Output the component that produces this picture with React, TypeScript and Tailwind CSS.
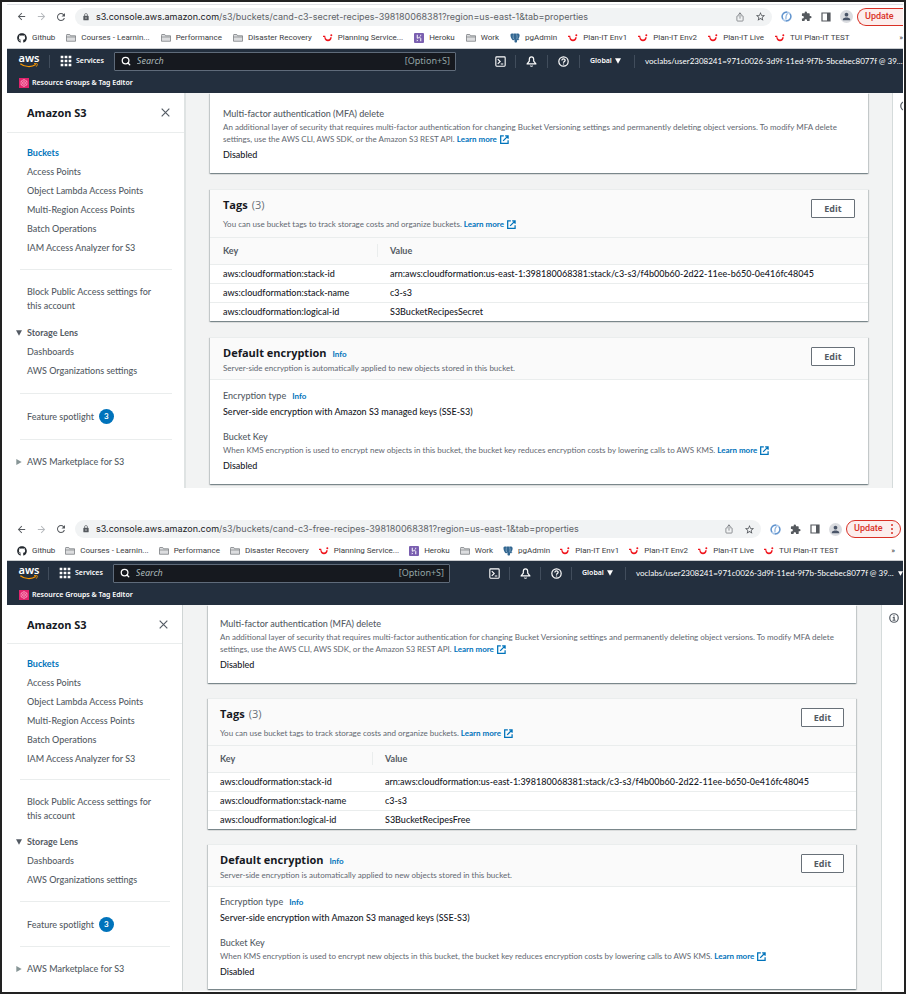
import type { ReactNode } from "react";
import { clsx } from "clsx";
import {
  MdApps,
  MdArrowBack,
  MdArrowForward,
  MdExtension,
  MdLock,
  MdPerson,
  MdRefresh,
  MdStarBorder,
} from "react-icons/md";
import { FiSearch } from "react-icons/fi";
import { FaGithub } from "react-icons/fa";
import { IoShareOutline } from "react-icons/io5";

type WindowProps = {
  bucket: string;
  logicalId: string;
  /** The slightly smaller of the two browser windows. */
  compact: boolean;
};

/* ---------- drawings ---------- */

function FolderIcon() {
  return (
    <svg viewBox="0 0 20 16" className="h-2 w-[10px] shrink-0" aria-hidden="true">
      <path d="M1 2.5V14.5H19V3.5H9L7.5 1H1.5Z" fill="#dcdddf" stroke="#75797d" strokeWidth="1.5" />
      <path d="M1 6H19" stroke="#75797d" strokeWidth="1.3" />
    </svg>
  );
}

function TuiIcon() {
  return (
    <svg viewBox="0 0 20 16" className="h-2 w-[10px] shrink-0" aria-hidden="true">
      <path d="M0 3.5H4.5C4.5 8 6.5 11 10 11S14 9 14.4 6.5H17.5C17 12 14 14.5 10 14.5S3 12 2.6 6H0Z" fill="#f0141c" />
      <circle cx="16.6" cy="2.5" r="2" fill="#f0141c" />
    </svg>
  );
}

function HerokuIcon() {
  return (
    <svg viewBox="0 0 20 20" className="size-[10px] shrink-0" aria-hidden="true">
      <rect width="20" height="20" rx="2" fill="#7a5fb0" />
      <path d="M6.5 3.5V10.5C9 9.2 13.5 8.5 13.5 11V16.5M13.5 3.5C13.5 5 13 6 12 7" fill="none" stroke="#fff" strokeWidth="2" />
      <path d="M5.5 12.8L8.3 15L5.5 17.2Z" fill="#fff" />
    </svg>
  );
}

function ElephantIcon() {
  return (
    <svg viewBox="0 0 20 20" className="size-[10px] shrink-0" aria-hidden="true">
      <path
        d="M1 3C2 .8 5 .8 7 1.5C9 .8 11 .8 12.5 1.5C15 .5 18.5 1 19.2 4C19.5 7 18 10 16.5 12.5L19 13.2C17.5 14.5 15.5 14.5 14 13.8V17.5C13.5 19.8 9.5 19.8 9 17.5V13C8 13.5 7.5 14.5 6 14.5C3.5 14 .5 7 1 3Z"
        fill="#336791"
      />
      <path d="M7 3C6.2 6 6 9 7.2 12M13 3C14.5 6 14.5 9 13.5 12.5" fill="none" stroke="#c5d8e8" strokeWidth="1" />
    </svg>
  );
}

function SwirlIcon() {
  return (
    <svg viewBox="0 0 20 20" className="size-[11px]" aria-hidden="true">
      <circle cx="10" cy="10" r="8" fill="none" stroke="#a9c6e8" strokeWidth="3" />
      <path d="M3.5 14.5A8 8 0 0 1 11 2.2M16.5 5.5A8 8 0 0 1 9 17.8" fill="none" stroke="#5f92cc" strokeWidth="2.2" />
      <path d="M12 4.5C8.5 8 8.5 12 9 15.5" fill="none" stroke="#8fb4de" strokeWidth="2" />
    </svg>
  );
}

function SidePanelIcon() {
  return (
    <svg viewBox="0 0 20 20" className="size-[10px]" aria-hidden="true">
      <path d="M2 2H18V18H2Z" fill="none" stroke="#55595e" strokeWidth="2.4" />
      <path d="M12 2H18V18H12Z" fill="#55595e" />
    </svg>
  );
}

function AwsLogo() {
  return (
    <span className="flex w-5 flex-col items-center" role="img" aria-label="aws">
      <span className="text-[11px] leading-[8px] font-semibold text-white">aws</span>
      <svg viewBox="0 0 40 11" className="mt-px h-[5px] w-5" aria-hidden="true">
        <path d="M1 1.5C11 9.5 26 9.5 35 3.5" fill="none" stroke="#f90" strokeWidth="2.6" />
        <path d="M31 1.5C34 .8 37 .6 38 1.5C38.8 3 37.5 6 36 8" fill="none" stroke="#f90" strokeWidth="2" />
      </svg>
    </span>
  );
}

function ShellIcon() {
  return (
    <svg viewBox="0 0 20 20" className="size-[11px]" fill="none" stroke="#fff" strokeWidth="2" aria-hidden="true">
      <rect x="1.5" y="1.5" width="17" height="17" rx="1.5" />
      <path d="M5 5.5L9.5 10L5 14.5M10.5 14.5H15" />
    </svg>
  );
}

function BellIcon() {
  return (
    <svg viewBox="0 0 20 20" className="size-[11px]" fill="none" stroke="#fff" strokeWidth="2.2" strokeLinejoin="round" aria-hidden="true">
      <path d="M2 14.5L6 9.5V6.5A4 5 0 0 1 14 6.5V9.5L18 14.5Z" />
      <path d="M8 17.5C8.5 19 11.5 19 12 17.5" />
    </svg>
  );
}

function HelpIcon() {
  return (
    <svg viewBox="0 0 20 20" className="size-[11px]" fill="none" stroke="#fff" strokeWidth="2.2" aria-hidden="true">
      <circle cx="10" cy="10" r="8.5" />
      <path d="M7 8C7 4.3 13 4.3 13 7.8C13 10 10 10 10 12.2M10 13.5V15.5" />
    </svg>
  );
}

function InfoCircleIcon() {
  return (
    <svg viewBox="0 0 20 20" className="size-[10px] shrink-0" fill="none" stroke="#545b64" strokeWidth="2.4" aria-hidden="true">
      <circle cx="10" cy="10" r="8.5" />
      <path d="M10 4.5V7M7.5 9.3H10.3V14.5M7 14.5H13" />
    </svg>
  );
}

function ResourceGroupsIcon() {
  return (
    <svg viewBox="0 0 20 20" className="size-[10px]" aria-hidden="true">
      <rect width="20" height="20" fill="#e0246c" />
      <path d="M10 3L16 6.5V13.5L10 17L4 13.5V6.5Z" fill="none" stroke="#ffb3d0" strokeWidth="1.3" />
      <circle cx="10" cy="10" r="2.6" fill="none" stroke="#ffb3d0" strokeWidth="1.3" />
      <path d="M10 3V7.5M10 12.5V17M4 6.5L8 9M12 11L16 13.5M16 6.5L12 9M8 11L4 13.5" stroke="#ffb3d0" strokeWidth="1" />
    </svg>
  );
}

function ExternalIcon() {
  return (
    <svg viewBox="0 0 20 20" className="ml-[3px] inline size-[9px] align-[-2px]" fill="none" stroke="#0073bb" strokeWidth="2.8" aria-hidden="true">
      <path d="M8.5 2H1.5V18.5H18V11.5M11.5 2H18V8.5M18 2L7 13" />
    </svg>
  );
}

function CloseIcon() {
  return (
    <svg viewBox="0 0 20 20" className="size-[9px]" stroke="#545b64" strokeWidth="2.6" aria-hidden="true">
      <path d="M1.5 1.5L18.5 18.5M18.5 1.5L1.5 18.5" />
    </svg>
  );
}

function DownTriangle({ className }: { className: string }) {
  return (
    <svg viewBox="0 0 10 9" className={clsx("shrink-0 fill-current", className)} aria-hidden="true">
      <path d="M0 0H10L5 9Z" />
    </svg>
  );
}

/* ---------- browser chrome ---------- */

function ChromeButton({ label, children }: { label: string; children: ReactNode }) {
  return (
    <button type="button" aria-label={label} className="flex h-5 w-5 shrink-0 items-center justify-center text-[#55595e]">
      {children}
    </button>
  );
}

function Toolbar({ bucket, compact }: { bucket: string; compact: boolean }) {
  return (
    <div className={clsx("flex h-6 items-center overflow-hidden pl-1 font-[Inter,sans-serif]", !compact && "border-t border-[#dfe1e5]")}>
      <ChromeButton label="Back"><MdArrowBack className="size-[11px]" /></ChromeButton>
      <ChromeButton label="Forward"><MdArrowForward className="size-[11px] text-[#b5b8bc]" /></ChromeButton>
      <ChromeButton label="Reload"><MdRefresh className="size-3" /></ChromeButton>
      <div className="ml-1 flex h-[18px] min-w-0 flex-1 items-center rounded-full bg-[#f1f3f4] pr-[2px] pl-[7px]">
        <MdLock className="size-2 shrink-0 text-[#55595e]" />
        <p className="ml-[6px] flex-1 truncate text-[9px] leading-[14px] text-[#5f6368]">
          <span className="text-[#202124]">s3.console.aws.amazon.com</span>
          /s3/buckets/{bucket}?region=us-east-1&amp;tab=properties
        </p>
        <ChromeButton label="Share"><IoShareOutline className="size-[10px]" /></ChromeButton>
        <ChromeButton label="Bookmark this tab"><MdStarBorder className="size-[11px]" /></ChromeButton>
      </div>
      <div className="ml-1 flex shrink-0 items-center">
        <ChromeButton label="Extension"><SwirlIcon /></ChromeButton>
        <ChromeButton label="Extensions"><MdExtension className="size-[11px]" /></ChromeButton>
        <ChromeButton label="Side panel"><SidePanelIcon /></ChromeButton>
        <ChromeButton label="Profile">
          <span className="flex size-[13px] items-center justify-center rounded-full bg-[#dadce0]">
            <MdPerson className="size-[11px] text-[#4a5568]" />
          </span>
        </ChromeButton>
      </div>
      <button
        type="button"
        className={clsx(
          "ml-px flex h-[18px] shrink-0 items-center border border-[#d93025] bg-[#fceeed] pl-[7px] font-[Roboto,sans-serif] text-[9px] font-medium text-[#d93025]",
          compact ? "mr-[2px] w-[55px] rounded-full" : "w-[46px] rounded-l-full border-r-0",
        )}
      >
        Update
        {compact && (
          <span className="mr-[7px] ml-auto flex flex-col gap-[2px]">
            <span className="size-[2px] rounded-full bg-[#d93025]" />
            <span className="size-[2px] rounded-full bg-[#d93025]" />
            <span className="size-[2px] rounded-full bg-[#d93025]" />
          </span>
        )}
      </button>
    </div>
  );
}

const bookmarks: { label: string; icon: ReactNode }[] = [
  { label: "Github", icon: <FaGithub className="size-[10px] text-[#24292f]" /> },
  { label: "Courses - Learnin...", icon: <FolderIcon /> },
  { label: "Performance", icon: <FolderIcon /> },
  { label: "Disaster Recovery", icon: <FolderIcon /> },
  { label: "Planning Service...", icon: <TuiIcon /> },
  { label: "Heroku", icon: <HerokuIcon /> },
  { label: "Work", icon: <FolderIcon /> },
  { label: "pgAdmin", icon: <ElephantIcon /> },
  { label: "Plan-IT Env1", icon: <TuiIcon /> },
  { label: "Plan-IT Env2", icon: <TuiIcon /> },
  { label: "Plan-IT Live", icon: <TuiIcon /> },
  { label: "TUI Plan-IT TEST", icon: <TuiIcon /> },
];

function Bookmarks({ compact }: { compact: boolean }) {
  return (
    <nav
      aria-label="Bookmarks"
      className={clsx(
        "flex items-center overflow-hidden border-b border-[#c9cccf] pl-[10px] font-[Roboto,sans-serif] text-[8px] text-[#3c4043]",
        compact ? "h-5 gap-[10px]" : "h-[21px] gap-[11px]",
      )}
    >
      {bookmarks.map((b) => (
        <a key={b.label} href="#" className="flex shrink-0 items-center gap-[5px] whitespace-nowrap">
          {b.icon}
          {b.label}
        </a>
      ))}
      <button type="button" aria-label="More bookmarks" className={clsx("ml-auto shrink-0", compact && "mr-2")}>
        »
      </button>
    </nav>
  );
}

/* ---------- AWS console header ---------- */

function NavSlot({ className, children }: { className: string; children: ReactNode }) {
  return <div className={clsx("flex h-[13px] shrink-0 items-center", className)}>{children}</div>;
}

function ConsoleNav({ compact }: { compact: boolean }) {
  return (
    <header className="overflow-hidden bg-[#232f3e] font-['Noto_Sans',sans-serif] text-[7px] font-semibold text-white">
      <div className="flex h-6 items-center pl-3">
        <a href="#" aria-label="AWS home"><AwsLogo /></a>
        <button type="button" className={clsx("flex h-[13px] items-center border-l border-[#414d5c] pl-2", compact ? "ml-[9px]" : "ml-[10px]")}>
          <MdApps className="size-4" />
          <span className="ml-[2px]">Services</span>
        </button>
        <label className="ml-[10px] flex h-[19px] min-w-0 flex-1 items-center rounded-[1px] border border-[#5f6b7a] bg-[#16191f] pr-[5px] pl-[6px]">
          <FiSearch className="size-[10px] shrink-0" strokeWidth={3} />
          <input
            type="search"
            aria-label="Search"
            placeholder="Search"
            className="ml-[6px] min-w-0 flex-1 bg-transparent text-[9px] font-normal outline-none placeholder:text-[#aab7b8] placeholder:italic"
          />
          <span className="text-[9px] font-normal text-[#95a5a6]">[Option+S]</span>
        </label>
        <NavSlot className="ml-[29px] w-[30px] justify-center">
          <button type="button" aria-label="CloudShell"><ShellIcon /></button>
        </NavSlot>
        <NavSlot className={clsx("justify-center border-l border-[#414d5c]", compact ? "w-[31px]" : "w-8")}>
          <button type="button" aria-label="Notifications"><BellIcon /></button>
        </NavSlot>
        <NavSlot className={clsx("justify-center border-l border-[#414d5c]", compact ? "w-[31px]" : "w-8")}>
          <button type="button" aria-label="Help"><HelpIcon /></button>
        </NavSlot>
        <NavSlot className={clsx("border-l border-[#414d5c] pl-[10px]", compact ? "w-[54px]" : "w-[55px]")}>
          <button type="button" aria-haspopup="menu" className="flex items-center gap-[3px]">
            Global <DownTriangle className="size-[6px]" />
          </button>
        </NavSlot>
        <NavSlot className={clsx("border-l border-[#414d5c] pl-[10px]", compact ? "w-[278px]" : "w-[269px] overflow-hidden")}>
          <button
            type="button"
            aria-haspopup="menu"
            className="flex shrink-0 items-center gap-1 font-[Lato,sans-serif] text-[8px] font-normal whitespace-nowrap"
          >
            voclabs/user2308241=971c0026-3d9f-11ed-9f7b-5bcebec8077f @ 39... <DownTriangle className="size-[5px]" />
          </button>
        </NavSlot>
      </div>
      <div className="flex h-5 items-center pl-3">
        <a href="#" className="flex items-center gap-[3px]">
          <ResourceGroupsIcon />
          Resource Groups &amp; Tag Editor
        </a>
      </div>
    </header>
  );
}

/* ---------- side navigation ---------- */

const primaryLinks = [
  "Buckets",
  "Access Points",
  "Object Lambda Access Points",
  "Multi-Region Access Points",
  "Batch Operations",
  "IAM Access Analyzer for S3",
];

function SideNav({ compact }: { compact: boolean }) {
  return (
    <aside
      className={clsx(
        "shrink-0 bg-white text-[9px] leading-[19px] font-medium text-[#545b64]",
        compact ? "w-[176px] border-r border-[#d0d5d5]" : "w-[179px] border-r-2 border-[#dfe3e3]",
      )}
    >
      <div className={clsx("flex items-center justify-between border-b border-[#eaeded] pr-[14px] pl-5", compact ? "h-[39px]" : "h-10")}>
        <h2 className="font-['Open_Sans',sans-serif] text-[11px] font-bold text-[#16191f]">Amazon S3</h2>
        <button type="button" aria-label="Close navigation"><CloseIcon /></button>
      </div>
      <nav aria-label="Amazon S3" className="pt-[10px] pr-3 pl-[13px]">
        <ul className="pl-[7px]">
          {primaryLinks.map((label) => (
            <li key={label}>
              <a href="#" className={label === "Buckets" ? "font-bold text-[#0073bb]" : undefined}>{label}</a>
            </li>
          ))}
        </ul>
        <hr className={clsx("border-[#eaeded]", compact ? "mt-[11px]" : "mt-3")} />
        <a href="#" className="mt-[15px] block pr-4 pl-[7px] leading-[14px]">
          Block Public Access settings for this account
        </a>
        <button type="button" aria-expanded="true" className={clsx("-ml-1 flex items-center gap-[5px] font-bold", compact ? "mt-[9px]" : "mt-[10px]")}>
          <DownTriangle className="size-[6px]" />
          Storage Lens
        </button>
        <ul className="pl-[7px]">
          <li><a href="#">Dashboards</a></li>
          <li><a href="#">AWS Organizations settings</a></li>
        </ul>
        <hr className={clsx("border-[#eaeded]", compact ? "mt-3" : "mt-[13px]")} />
        <a href="#" className="mt-[15px] flex items-center gap-[5px] pl-[7px] leading-[15px]">
          Feature spotlight
          <span className="flex size-[15px] items-center justify-center rounded-full bg-[#0073bb] text-[8px] font-bold text-white">3</span>
        </a>
        <hr className={clsx("border-[#eaeded]", compact ? "mt-[14px]" : "mt-[15px]")} />
        <button type="button" aria-expanded="false" className="mt-3 -ml-1 flex items-center gap-[5px]">
          <DownTriangle className="size-[6px] -rotate-90 text-[#879596]" />
          AWS Marketplace for S3
        </button>
      </nav>
    </aside>
  );
}

/* ---------- main column ---------- */

function Card({ children, className }: { children: ReactNode; className?: string }) {
  return (
    <section
      className={clsx(
        "bg-white shadow-[0_1px_1px_0_rgba(0,28,36,0.3),1px_1px_1px_0_rgba(0,28,36,0.15),-1px_1px_1px_0_rgba(0,28,36,0.15)]",
        className,
      )}
    >
      {children}
    </section>
  );
}

function CardHeader({ title, extra, description, compact, className }: {
  title: string;
  extra: ReactNode;
  description: ReactNode;
  compact: boolean;
  className: string;
}) {
  return (
    <div className={clsx("flex items-start justify-between border-y border-[#eaeded] bg-[#fafafa] pt-[7px]", compact ? "px-3" : "px-[13px]", className)}>
      <div>
        <h2 className="flex items-baseline font-['Open_Sans',sans-serif] text-[11px] leading-4 font-bold text-[#16191f]">
          {title}
          {extra}
        </h2>
        {description}
      </div>
      <button
        type="button"
        className={clsx(
          "mt-[2px] h-[19px] shrink-0 rounded-[1px] border border-[#687078] bg-white font-['Open_Sans',sans-serif] text-[9px] font-bold text-[#545b64]",
          compact ? "w-[43px]" : "w-11",
        )}
      >
        Edit
      </button>
    </div>
  );
}

function LearnMore() {
  return (
    <a href="#" className="font-bold whitespace-nowrap text-[#0073bb]">
      Learn more
      <ExternalIcon />
    </a>
  );
}

function InfoLink() {
  return <a href="#" className="ml-[6px] font-[Lato,sans-serif] text-[8px] font-bold text-[#0073bb]">Info</a>;
}

function Description({ children, className }: { children: ReactNode; className?: string }) {
  return <p className={clsx("text-[8px] leading-3 font-normal text-[#5f6770]", className)}>{children}</p>;
}

function Main({ compact, logicalId }: { compact: boolean; logicalId: string }) {
  const rows = [
    ["aws:cloudformation:stack-id", "arn:aws:cloudformation:us-east-1:398180068381:stack/c3-s3/f4b00b60-2d22-11ee-b650-0e416fc48045"],
    ["aws:cloudformation:stack-name", "c3-s3"],
    ["aws:cloudformation:logical-id", logicalId],
  ];
  const gap = compact ? "mt-[15px]" : "mt-4";
  const inset = compact ? "pl-3" : "pl-[13px]";
  return (
    <main
      className={clsx(
        "min-w-0 flex-1 bg-[#f2f3f3] text-[9px] leading-[14px] font-medium text-[#16191f]",
        compact ? "pr-[25px] pb-[2px] pl-[25px]" : "pr-6 pb-1 pl-6",
      )}
    >
      <Card className={clsx("pr-3 pb-[11px]", inset, compact ? "pt-3" : "pt-[14px]")}>
        <h3 className="text-[#545b64]">Multi-factor authentication (MFA) delete</h3>
        <Description>
          An additional layer of security that requires multi-factor authentication for changing Bucket Versioning settings and
          permanently deleting object versions. To modify MFA delete settings, use the AWS CLI, AWS SDK, or the Amazon S3 REST
          API. <LearnMore />
        </Description>
        <p className="mt-[3px]">Disabled</p>
      </Card>

      <Card className={gap}>
        <CardHeader
          compact={compact}
          title="Tags"
          extra={<span className="ml-1 font-normal text-[#687078]">(3)</span>}
          className={compact ? "pb-[6px]" : "pb-[7px]"}
          description={
            <Description className="mt-[5px]">
              You can use bucket tags to track storage costs and organize buckets. <LearnMore />
            </Description>
          }
        />
        <table className="w-full table-fixed border-collapse text-left">
          <thead className="bg-[#fafafa] text-[#545b64]">
            <tr className="h-[26px] border-b border-[#eaeded]">
              <th scope="col" className={clsx("py-0 font-bold", inset, compact ? "w-[164px]" : "w-[167px]")}>Key</th>
              <th scope="col" className="py-0 font-bold">
                <span className="flex h-[13px] items-center border-l border-[#eaeded] pl-3">Value</span>
              </th>
            </tr>
          </thead>
          <tbody>
            {rows.map(([key, value]) => (
              <tr key={key} className="h-[19px] border-b border-[#eaeded] last:border-b-0">
                <td className={clsx("py-0", inset)}>{key}</td>
                <td className="py-0 pl-[13px] whitespace-nowrap">{value}</td>
              </tr>
            ))}
          </tbody>
        </table>
      </Card>

      <Card className={gap}>
        <CardHeader
          compact={compact}
          title="Default encryption"
          extra={<InfoLink />}
          className="pb-[5px]"
          description={
            <Description>Server-side encryption is automatically applied to new objects stored in this bucket.</Description>
          }
        />
        <div className={clsx("pr-3", inset, compact ? "pt-2 pb-[10px]" : "pt-[9px] pb-[11px]")}>
          <h3 className="flex items-baseline text-[#545b64]">
            Encryption type
            <InfoLink />
          </h3>
          <p className="mt-[2px]">Server-side encryption with Amazon S3 managed keys (SSE-S3)</p>
          <h3 className="mt-[11px] text-[#545b64]">Bucket Key</h3>
          <Description>
            When KMS encryption is used to encrypt new objects in this bucket, the bucket key reduces encryption costs by
            lowering calls to AWS KMS. <LearnMore />
          </Description>
          <p className="mt-[3px]">Disabled</p>
        </div>
      </Card>
    </main>
  );
}

function BrowserWindow({ bucket, logicalId, compact }: WindowProps) {
  return (
    <div className="pr-px pl-[5px]">
      <Toolbar bucket={bucket} compact={compact} />
      <Bookmarks compact={compact} />
      <ConsoleNav compact={compact} />
      <div className="flex">
        <SideNav compact={compact} />
        <Main compact={compact} logicalId={logicalId} />
        <div
          className={clsx(
            "shrink-0 overflow-hidden border-l border-[#d5dbdb] bg-white pt-2 pl-[7px]",
            compact ? "w-[22px]" : "w-[11px]",
          )}
        >
          <button type="button" aria-label="Open help panel" className="block"><InfoCircleIcon /></button>
        </div>
      </div>
    </div>
  );
}

export default function App() {
  return (
    <div className="flex min-h-screen flex-col gap-[29px] border-2 border-[#222] bg-white pt-[2px] font-[Lato,'Open_Sans',sans-serif]">
      <BrowserWindow bucket="cand-c3-secret-recipes-398180068381" logicalId="S3BucketRecipesSecret" compact={false} />
      <BrowserWindow bucket="cand-c3-free-recipes-398180068381" logicalId="S3BucketRecipesFree" compact />
    </div>
  );
}
